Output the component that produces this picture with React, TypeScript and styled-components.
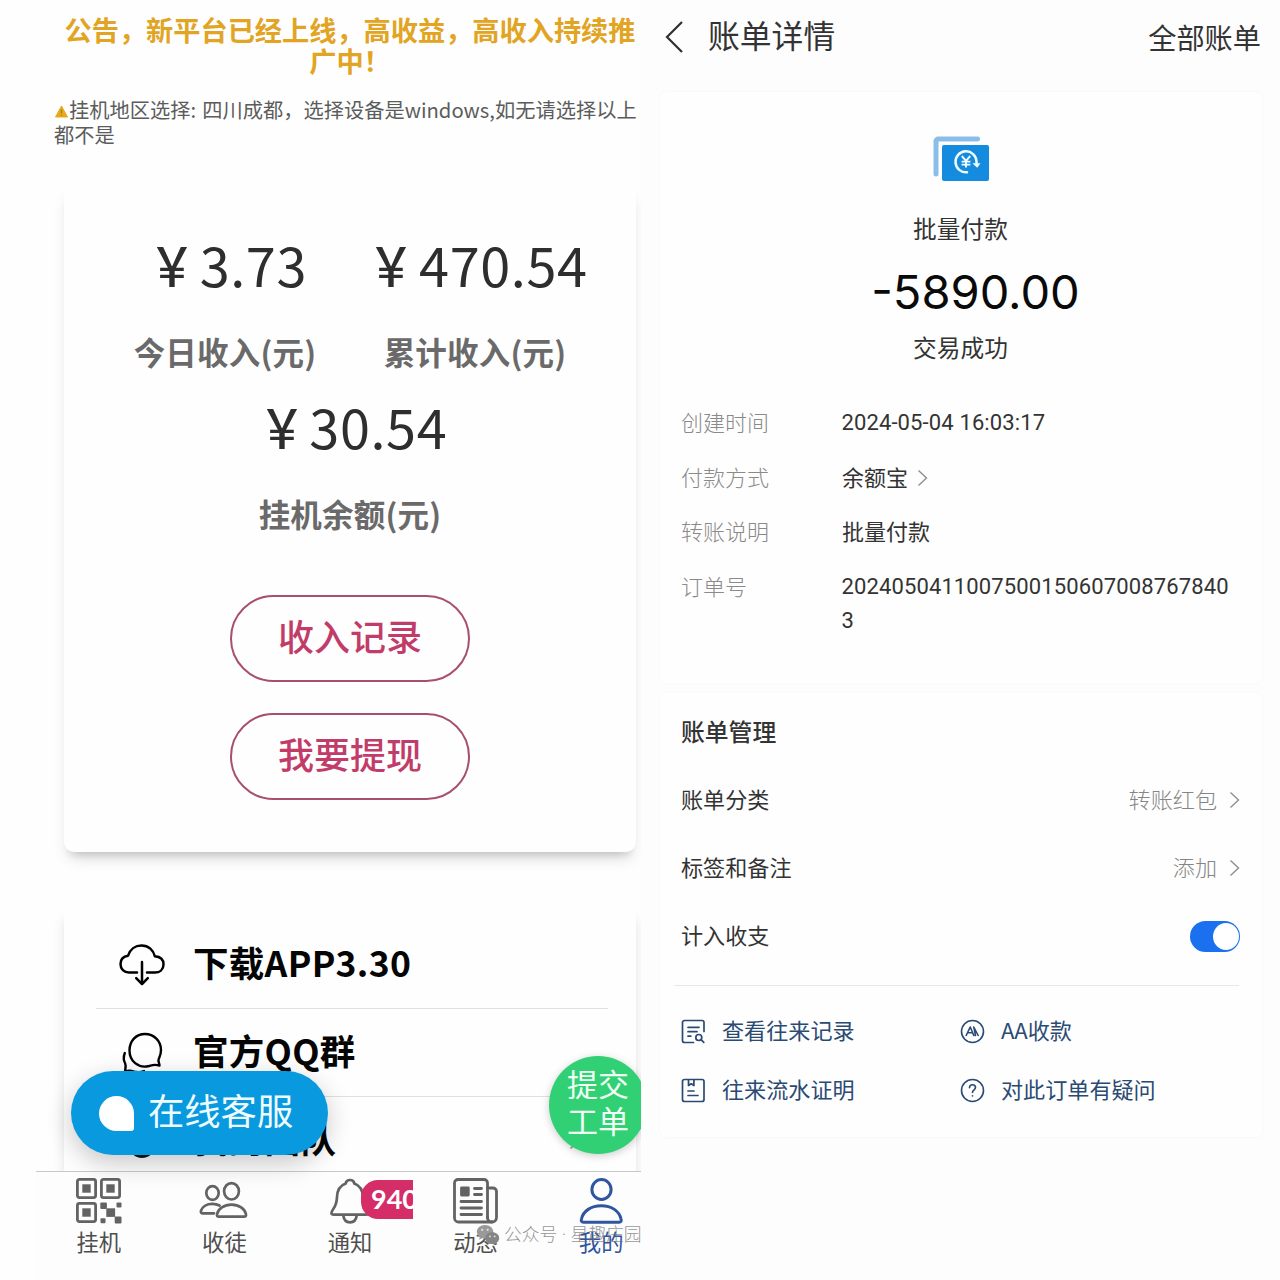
import React from "react";
import styled, { createGlobalStyle } from "styled-components";

const cjk = `"Noto Sans CJK SC", "Noto Sans", sans-serif`;

const Global = createGlobalStyle`
  * { box-sizing: border-box; }
  body { margin: 0; background: #fdfdfd; font-family: ${cjk}; }
  svg { display: block; flex: none; }
`;

const Page = styled.div`
  width: 1280px;
  height: 1280px;
  display: flex;
  overflow: hidden;
  background: #fdfdfd;
`;

/* ---------- earnings screen ---------- */

const Earnings = styled.section`
  position: relative;
  width: 641px;
  height: 1280px;
  overflow: hidden;
  display: flex;
  flex-direction: column;
  background: #fefefe;
`;

const Headline = styled.h1`
  margin: 14px 0 0 60px;
  width: 580px;
  text-align: center;
  font-size: 27.2px;
  line-height: 31px;
  font-weight: 700;
  color: #e2a423;
  white-space: nowrap;
`;

const Hint = styled.p`
  margin: 21px 0 0 54px;
  font-size: 20.25px;
  line-height: 25px;
  color: #5c5c5c;
  word-spacing: 1.5px;
  white-space: nowrap;
`;

const Warn = styled.svg`
  && { display: inline-block; }
  margin: 0 1px 0 1px;
  vertical-align: 0;
`;

const StatsCard = styled.div`
  margin: 38px 0 0 64px;
  width: 572px;
  height: 667px;
  padding-top: 41px;
  border-radius: 10px;
  background: #fefefe;
  box-shadow: 0 10px 16px -5px rgba(0, 0, 0, 0.17), 0 14px 6px -12px rgba(0, 0, 0, 0.06), 0 8px 5px -3px rgba(0, 0, 0, 0.05);
  display: flex;
  flex-direction: column;
  align-items: center;
`;

const StatRow = styled.div`
  display: flex;
  height: 162px;
`;

const Stat = styled.div`
  width: 250px;
  display: flex;
  flex-direction: column;
  align-items: center;
`;

const Amount = styled.div`
  height: 80px;
  padding-left: 2px;
  line-height: 76px;
  font-size: 54px;
  letter-spacing: 0.6px;
  color: #2e2e2e;
  white-space: nowrap;
`;

const Yuan = styled.span`
  display: inline-block;
  font-weight: 500;
  transform: scaleX(0.86);
`;

const Caption = styled.div`
  height: 82px;
  line-height: 90px;
  font-size: 31.5px;
  font-weight: 700;
  color: #6a6a6a;
  letter-spacing: 0.2px;
  white-space: nowrap;
`;

const PillButton = styled.button`
  width: 240px;
  height: 87px;
  margin: 0 0 31px;
  padding: 0 0 8px;
  border: 2px solid #a8506a;
  border-radius: 44px;
  background: transparent;
  font: 500 36px ${cjk};
  color: #c23c69;
`;

const Buttons = styled.div`
  margin-top: 45px;
  display: flex;
  flex-direction: column;
`;

const MenuCard = styled.div`
  margin: 41px 0 0 64px;
  width: 572px;
  height: 278px;
  padding: 28px 28px 0 32px;
  background: #fefefe;
  box-shadow: 0 26px 12px -1px rgba(0, 0, 0, 0.13);
  overflow: hidden;
`;

const MenuRow = styled.div`
  height: 88px;
  display: flex;
  align-items: center;
  border-bottom: 1px solid #e0e0e0;
`;

const MenuIcon = styled.div`
  width: 46px;
  margin: 0 28px 0 23px;
  display: flex;
  justify-content: center;
`;

const MenuText = styled.div`
  flex: 1;
  padding-bottom: 6px;
  font-size: 35.5px;
  line-height: 50px;
  font-weight: 700;
  color: #050505;
  letter-spacing: 0.3px;
  white-space: nowrap;
`;

const MenuArrow = styled.div`
  margin-right: 28px;
`;

const TabBar = styled.nav`
  position: absolute;
  left: 36px;
  bottom: 0;
  width: 605px;
  height: 109px;
  border-top: 1px solid #c9c9c9;
  background: #fdfdfd;
  display: flex;
`;

const Tab = styled.div<{ $active?: boolean }>`
  width: 125.6px;
  padding-top: 6px;
  display: flex;
  flex-direction: column;
  align-items: center;
  flex: none;
  color: ${(p) => (p.$active ? "#2f54a0" : "#636363")};
`;

const TabIcon = styled.div`
  position: relative;
  width: 50px;
  height: 48px;
  display: flex;
  justify-content: center;
`;

const TabLabel = styled.div<{ $active?: boolean }>`
  margin-top: -1px;
  font-size: 22.3px;
  line-height: 32px;
  color: ${(p) => (p.$active ? "#2f54a0" : "#4e4e4e")};
`;

const Badge = styled.span`
  position: absolute;
  left: 36px;
  top: 2px;
  width: 52px;
  height: 39px;
  padding-left: 10px;
  overflow: hidden;
  border-radius: 17px 0 0 17px;
  background: #d52d68;
  color: #fff;
  font: 700 27px/38px Lato, sans-serif;
`;

const SupportButton = styled.div`
  position: absolute;
  left: 71px;
  top: 1071px;
  width: 257px;
  height: 84px;
  padding-left: 28px;
  border-radius: 42px;
  background: #0999df;
  box-shadow: 0 8px 26px rgba(0, 0, 0, 0.22);
  display: flex;
  align-items: center;
  gap: 14px;
  color: #effcff;
  font-size: 36.3px;
  line-height: 50px;
  white-space: nowrap;
`;

const Drop = styled.span`
  width: 35px;
  height: 35px;
  border-radius: 50% 50% 3px 50%;
  background: #fff;
`;

const SupportText = styled.span`
  padding-bottom: 9px;
`;

const TicketButton = styled.div`
  position: absolute;
  left: 549px;
  top: 1056px;
  width: 98px;
  height: 98px;
  padding-top: 8px;
  border-radius: 50%;
  background: #31d074;
  box-shadow: 0 2px 8px rgba(0, 0, 0, 0.2);
  text-align: center;
  color: #effff4;
  font-size: 31px;
  line-height: 37px;
`;

const Watermark = styled.div`
  position: absolute;
  left: 476px;
  top: 1221px;
  width: 165px;
  overflow: hidden;
  display: flex;
  align-items: center;
  gap: 4px;
  color: rgba(110, 110, 110, 0.75);
  font-family: Roboto, ${cjk};
  font-size: 17.8px;
  font-weight: 300;
  line-height: 27px;
  white-space: nowrap;
`;

/* ---------- bill screen ---------- */

const Bill = styled.section`
  width: 639px;
  height: 1280px;
  display: flex;
  flex-direction: column;
  background: #fdfdfd;
  color: #333;
`;

const BillHeader = styled.header`
  height: 92px;
  padding: 9px 19px 0 24px;
  display: flex;
  align-items: flex-start;
`;

const BackBox = styled.div`
  padding-top: 12px;
  width: 43px;
`;

const BillTitle = styled.h2`
  margin: 0;
  flex: 1;
  font-size: 31.8px;
  line-height: 51px;
  font-weight: 400;
`;

const AllBills = styled.div`
  font-size: 28.2px;
  line-height: 55px;
`;

const BillCard = styled.div<{ $h: number }>`
  margin: 0 18px 10px 19px;
  height: ${(p) => p.$h}px;
  padding: 0 22px 0 21px;
  background: #fefefe;
  border-radius: 6px;
  box-shadow: 0 0 3px rgba(0, 0, 0, 0.045);
`;

const Summary = styled.div`
  padding-top: 44px;
  height: 312px;
  display: flex;
  flex-direction: column;
  align-items: center;
`;

const SummaryText = styled.div`
  font-size: 23.7px;
  line-height: 36px;
`;

const PayeeName = styled(SummaryText)`
  margin-top: 29px;
`;

const Total = styled.div`
  margin: 18px 0 9px;
  padding-left: 30px;
  font-family: Inter, sans-serif;
  font-size: 47px;
  line-height: 56px;
  color: #0a0a0a;
`;

const Detail = styled.div`
  display: flex;
  align-items: flex-start;
  min-height: 54.6px;
`;

const DetailLabel = styled.div`
  width: 161px;
  font-size: 22px;
  line-height: 34px;
  font-weight: 300;
  color: #8a8a8a;
`;

const DetailNumber = styled.div`
  width: 400px;
  padding-top: 2px;
  font-family: Roboto, sans-serif;
  font-size: 22px;
  line-height: 34.3px;
  letter-spacing: 0.13px;
  word-break: break-all;
`;

const DetailValue = styled.div`
  display: flex;
  align-items: flex-start;
  gap: 9px;
  font-size: 22px;
  line-height: 34px;

  svg {
    margin-top: 10px;
  }
`;

const SectionTitle = styled.h3`
  margin: 0;
  padding-top: 21px;
  height: 73px;
  font-size: 23.8px;
  line-height: 34px;
  font-weight: 500;
`;

const Setting = styled.div`
  height: 68px;
  display: flex;
  align-items: center;
  justify-content: space-between;
  font-size: 22.1px;
  line-height: 32px;
`;

const RaisedText = styled.span`
  padding-bottom: 5px;
`;

const SettingValue = styled.div`
  display: flex;
  align-items: center;
  gap: 12px;
  font-weight: 300;
  color: #858585;
`;

const Switch = styled.span`
  width: 50px;
  height: 31px;
  padding: 2px 1px;
  border-radius: 16px;
  background: #1a70ee;
  display: flex;
  justify-content: flex-end;
`;

const Knob = styled.span`
  width: 26px;
  height: 27px;
  border-radius: 50%;
  background: #fff;
`;

const Rule = styled.div`
  height: 1px;
  margin: 15px 1px 0 -7px;
  background: #e8e8e8;
`;

const Actions = styled.div`
  padding-top: 16px;
  display: grid;
  grid-template-columns: 279px 1fr;
  grid-auto-rows: 59px;
`;

const Action = styled.div`
  display: flex;
  align-items: center;
  gap: 16px;
  font-size: 22.1px;
  line-height: 32px;
  color: #2a4a73;
  white-space: nowrap;
`;

const Chevron = () => (
  <svg width="11" height="18" viewBox="0 0 11 18" fill="none" stroke="#8f8f8f" strokeWidth="1.4">
    <path d="M1.5 1.5 9.5 9l-8 7.5" />
  </svg>
);

const line = { fill: "none", stroke: "currentColor", strokeLinecap: "round", strokeLinejoin: "round" } as const;

const QrIcon = () => (
  <svg width="46" height="46" viewBox="0 0 46 46" fill="currentColor">
    <g {...line} strokeWidth="2.8">
      <rect x="1.4" y="1.4" width="18.2" height="18.2" rx="2" />
      <rect x="25.4" y="1.4" width="18.2" height="18.2" rx="2" />
      <rect x="1.4" y="25.4" width="18.2" height="18.2" rx="2" />
    </g>
    <rect x="6.3" y="6.3" width="8.4" height="8.4" />
    <rect x="30.3" y="6.3" width="8.4" height="8.4" />
    <rect x="6.3" y="30.3" width="8.4" height="8.4" />
    <rect x="24.3" y="24.5" width="6.6" height="6.4" rx="1" />
    <rect x="40.5" y="24.5" width="5" height="5" rx="1" />
    <rect x="30.3" y="30.3" width="8.8" height="8.6" />
    <rect x="24.5" y="40.3" width="5" height="5" rx="1" />
    <rect x="38.7" y="38.6" width="6.8" height="6.8" rx="1" />
  </svg>
);

const PeopleIcon = () => (
  <svg width="50" height="46" viewBox="0 0 50 46" {...line} strokeWidth="2.7">
    <ellipse cx="13.5" cy="15" rx="6.2" ry="6.8" />
    <ellipse cx="32.5" cy="13.3" rx="7.4" ry="8.2" />
    <path d="M20 38.700c-1.800 0-2.300-1-1.900-2.700 1.200-5 6.700-9.300 14.400-9.300S45.700 31 46.900 36c.4 1.700-.1 2.700-1.900 2.700z" />
    <path d="M15 35.300H4c-1.800 0-2.500-1-2-2.600 1.200-3.900 5.500-6.900 11.500-6.900 3 0 5.200.7 7 1.700" />
  </svg>
);

const BellIcon = () => (
  <svg width="42" height="46" viewBox="0 0 42 46" {...line} strokeWidth="2.700">
    <path d="M21 2c-2.500 0-4 1.400-4.300 3.500C10.500 7.700 8.200 13 8 19c-.2 6.500-1.200 8.800-4 12.500-2.200 3-2.200 5.200.8 5.200h32.400c3 0 3-2.200.8-5.200-2.800-3.700-3.800-6-4-12.500-.2-6-2.500-11.300-8.700-13.500C25 3.400 23.500 2 21 2z" />
    <path d="M14.300 37.500c.5 4 3 6.800 6.700 6.800s6.200-2.800 6.700-6.800" />
  </svg>
);

const NewsIcon = () => (
  <svg width="46" height="46" viewBox="0 0 46 46" {...line} strokeWidth="2.800">
    <path d="M34.500 40V5a3.500 3.500 0 0 0-3.500-3.500H5A3.500 3.500 0 0 0 1.500 5v35A4 4 0 0 0 5.500 44h33.500" />
    <path d="M34.500 10H40a3.500 3.500 0 0 1 3.500 3.500v26a4.500 4.500 0 0 1-9 0" />
    <rect x="8.500" y="10" width="6.800" height="7" fill="currentColor" />
    <path d="M21.500 10.500h7M21.500 16.500h7M8 23.500h20.500M8 30h20.500M8 36.500h20.500" />
  </svg>
);

const PersonIcon = () => (
  <svg width="44" height="46" viewBox="0 0 44 46" {...line} strokeWidth="3">
    <ellipse cx="22.500" cy="11.500" rx="9.600" ry="10" />
    <path d="M4.500 44.300c-2 0-2.600-1.400-2-3.500C4.300 33 12 27.800 22.300 27.800S40.200 33 42 40.800c.6 2.100 0 3.500-2 3.500z" />
  </svg>
);

const CloudIcon = () => (
  <svg width="46" height="42" viewBox="0 0 46 42" {...line} strokeWidth="2.500">
    <path d="M18 28.500H10c-5 0-8.500-3.400-8.500-8.500 0-4.800 3.300-7.700 7.600-8.300C11 5.200 16.300 1.500 22.500 1.500c7.200 0 12 4.700 13.300 10.800 5.200.4 8.700 3.200 8.700 8.100 0 5-3.700 8.100-8.700 8.100H28" />
    <path d="M23 18v22M17.200 34.200l5.800 6 5.800-6" />
  </svg>
);

const ChatIcon = () => (
  <svg width="46" height="44" viewBox="0 0 46 44" {...line} strokeWidth="2.400">
    <path d="M40.500 34.500c-5.500-1.600-7-.5-10.500.5C19 37.700 10.500 30 10.500 19.500 10.500 10 17 3 26 3s16 7 16 16c0 4.500-1.500 7-2.300 9-.9 2.200.8 4.500.8 6.500z" />
    <path d="M5.800 22c-1.500 4-1 8 .4 10.500C7.300 35 6.500 37.500 6 40.500c5-1.500 6-.8 9.500.2 3.500.8 6.500.5 9.500-.7" />
  </svg>
);

const TeamIcon = () => (
  <svg width="46" height="46" viewBox="0 0 46 46" fill="#14141e">
    <circle cx="23" cy="14" r="9" />
    <circle cx="23" cy="27" r="13" />
  </svg>
);

const BatchPayIcon = () => (
  <svg width="56" height="45" viewBox="0 0 56 45">
    <path d="M3 38V5.200A2.200 2.200 0 0 1 5.200 3H44.500" fill="none" stroke="#8abde8" strokeWidth="5" strokeLinecap="round" />
    <rect x="9" y="9" width="47" height="36" rx="2" fill="#148bdf" />
    <path d="M34 36.300a10.500 10.500 0 1 1 9.500-10.800v2" fill="none" stroke="#f1fcff" strokeWidth="2.500" strokeLinecap="round" />
    <path d="M39.300 27.200h8.200l-3.300 4.500z" fill="#f1fcff" />
    <path d="m28.800 20 4.200 4.800 4.200-4.800M33 24.800V31.500M28.600 25.600h8.800M28.600 28.600h8.800" fill="none" stroke="#f1fcff" strokeWidth="1.900" />
  </svg>
);

const RecordIcon = () => (
  <svg width="25" height="25" viewBox="0 0 25 25" {...line} strokeWidth="1.700">
    <path d="M23 12.500V3.500a2 2 0 0 0-2-2H3.500a2 2 0 0 0-2 2v18a2 2 0 0 0 2 2h9" />
    <path d="M7 8.300h11M7 12.700h9M7 17.200h2.800" />
    <circle cx="17.800" cy="18.500" r="3" />
    <path d="m20.200 20.800 2.600 2.600" />
  </svg>
);

const ProofIcon = () => (
  <svg width="25" height="25" viewBox="0 0 25 25" {...line} strokeWidth="1.700">
    <rect x="1.500" y="1.500" width="21.500" height="22" rx="2" />
    <path d="M7.500 2v5.500l2.700-1.700 2.700 1.700V2M7 13h6M7 17.500h10" />
  </svg>
);

const SplitIcon = () => (
  <svg width="25" height="25" viewBox="0 0 25 25" {...line} strokeWidth="1.600">
    <circle cx="12.500" cy="12.500" r="11" />
    <path d="m6.200 16.500 4-8.500 3.600 8.500M8 13.700h4.500M13.700 8l4.500 8.500M13.800 8.200l1.700 8.300" />
  </svg>
);

const QuestionIcon = () => (
  <svg width="25" height="25" viewBox="0 0 25 25" {...line} strokeWidth="1.600">
    <circle cx="12.500" cy="12.500" r="11" />
    <path d="M9.500 9.800c0-1.900 1.300-3.100 3-3.100s3 1.200 3 2.800c0 2.300-3 2.300-3 5" />
    <path d="M12.500 17.700v.2" />
  </svg>
);

const WechatIcon = () => (
  <svg width="24" height="22" viewBox="0 0 24 22">
    <path d="M9 1C4.300 1 .8 4 .8 7.800c0 2.200 1.200 4 3 5.300L3 15.800l3-1.600c1 .3 2 .4 3 .4 4.700 0 8.300-3 8.300-6.800S13.700 1 9 1z" fill="#9a9a9a" />
    <path d="M16.300 8.300c-4 0-7 2.600-7 5.900s3 5.900 7 5.900c.8 0 1.700-.1 2.400-.4l2.600 1.400-.7-2.300c1.600-1.100 2.600-2.700 2.600-4.600 0-3.300-3-5.900-6.900-5.900z" fill="#858585" />
    <g fill="#e2e2e2">
      <circle cx="6.200" cy="5.800" r="1.100" />
      <circle cx="11.700" cy="5.800" r="1.100" />
      <circle cx="14" cy="12.400" r=".9" />
      <circle cx="18.700" cy="12.400" r=".9" />
    </g>
  </svg>
);

const menu = [
  { icon: <CloudIcon />, text: "下载APP3.30" },
  { icon: <ChatIcon />, text: "官方QQ群" },
  { icon: <TeamIcon />, text: "我的团队", arrow: true },
];

const tabs = [
  { icon: <QrIcon />, label: "挂机" },
  { icon: <PeopleIcon />, label: "收徒" },
  { icon: <BellIcon />, label: "通知", badge: "940" },
  { icon: <NewsIcon />, label: "动态" },
  { icon: <PersonIcon />, label: "我的", active: true },
];

const actions = [
  { icon: <RecordIcon />, text: "查看往来记录" },
  { icon: <SplitIcon />, text: "AA收款" },
  { icon: <ProofIcon />, text: "往来流水证明" },
  { icon: <QuestionIcon />, text: "对此订单有疑问" },
];

const StatItem = ({ value, label }: { value: string; label: string }) => (
  <Stat>
    <Amount>
      <Yuan>￥</Yuan>
      {value}
    </Amount>
    <Caption>{label}</Caption>
  </Stat>
);

export default function App() {
  return (
    <Page>
      <Global />
      <Earnings>
        <Headline>
          公告，新平台已经上线，高收益，高收入持续推
          <br />
          广中！
        </Headline>
        <Hint>
          <Warn width="13" height="13" viewBox="0 0 13 13">
            <path d="M6.500 1 12.500 12H.5z" fill="#e6a91c" stroke="#e6a91c" strokeLinejoin="round" />
            <path d="M6.500 4.500v4M6.500 9.800v1" stroke="#a87c1c" strokeWidth="1.200" />
          </Warn>
          挂机地区选择: 四川成都，选择设备是windows,如无请选择以上
          <br />
          都不是
        </Hint>
        <StatsCard>
          <StatRow>
            <StatItem value="3.73" label="今日收入(元)" />
            <StatItem value="470.54" label="累计收入(元)" />
          </StatRow>
          <StatRow>
            <StatItem value="30.54" label="挂机余额(元)" />
          </StatRow>
          <Buttons>
            <PillButton>收入记录</PillButton>
            <PillButton>我要提现</PillButton>
          </Buttons>
        </StatsCard>
        <MenuCard>
          {menu.map((m) => (
            <MenuRow key={m.text}>
              <MenuIcon>{m.icon}</MenuIcon>
              <MenuText>{m.text}</MenuText>
              {m.arrow && (
                <MenuArrow>
                  <Chevron />
                </MenuArrow>
              )}
            </MenuRow>
          ))}
        </MenuCard>
        <TabBar>
          {tabs.map((t) => (
            <Tab key={t.label} $active={t.active}>
              <TabIcon>
                {t.icon}
                {t.badge && <Badge>{t.badge}</Badge>}
              </TabIcon>
              <TabLabel $active={t.active}>{t.label}</TabLabel>
            </Tab>
          ))}
        </TabBar>
        <SupportButton>
          <Drop />
          <SupportText>在线客服</SupportText>
        </SupportButton>
        <TicketButton>
          提交
          <br />
          工单
        </TicketButton>
        <Watermark>
          <WechatIcon />
          <span>公众号 · 星趣庄园</span>
        </Watermark>
      </Earnings>

      <Bill>
        <BillHeader>
          <BackBox>
            <svg width="19" height="32" viewBox="0 0 19 32" fill="none" stroke="#303030" strokeWidth="2.200">
              <path d="M17 1 2 16l15 15" />
            </svg>
          </BackBox>
          <BillTitle>账单详情</BillTitle>
          <AllBills>全部账单</AllBills>
        </BillHeader>

        <BillCard $h={591}>
          <Summary>
            <BatchPayIcon />
            <PayeeName>批量付款</PayeeName>
            <Total>-5890.00</Total>
            <SummaryText>交易成功</SummaryText>
          </Summary>
          <Detail>
            <DetailLabel>创建时间</DetailLabel>
            <DetailNumber>2024-05-04 16:03:17</DetailNumber>
          </Detail>
          <Detail>
            <DetailLabel>付款方式</DetailLabel>
            <DetailValue>
              余额宝
              <Chevron />
            </DetailValue>
          </Detail>
          <Detail>
            <DetailLabel>转账说明</DetailLabel>
            <DetailValue>批量付款</DetailValue>
          </Detail>
          <Detail>
            <DetailLabel>订单号</DetailLabel>
            <DetailNumber>20240504110075001506070087678403</DetailNumber>
          </Detail>
        </BillCard>

        <BillCard $h={444}>
          <SectionTitle>账单管理</SectionTitle>
          <Setting>
            <RaisedText>账单分类</RaisedText>
            <SettingValue>
              <RaisedText>转账红包</RaisedText>
              <Chevron />
            </SettingValue>
          </Setting>
          <Setting>
            <RaisedText>标签和备注</RaisedText>
            <SettingValue>
              <RaisedText>添加</RaisedText>
              <Chevron />
            </SettingValue>
          </Setting>
          <Setting>
            <RaisedText>计入收支</RaisedText>
            <Switch>
              <Knob />
            </Switch>
          </Setting>
          <Rule />
          <Actions>
            {actions.map((a) => (
              <Action key={a.text}>
                {a.icon}
                <RaisedText>{a.text}</RaisedText>
              </Action>
            ))}
          </Actions>
        </BillCard>
      </Bill>
    </Page>
  );
}
